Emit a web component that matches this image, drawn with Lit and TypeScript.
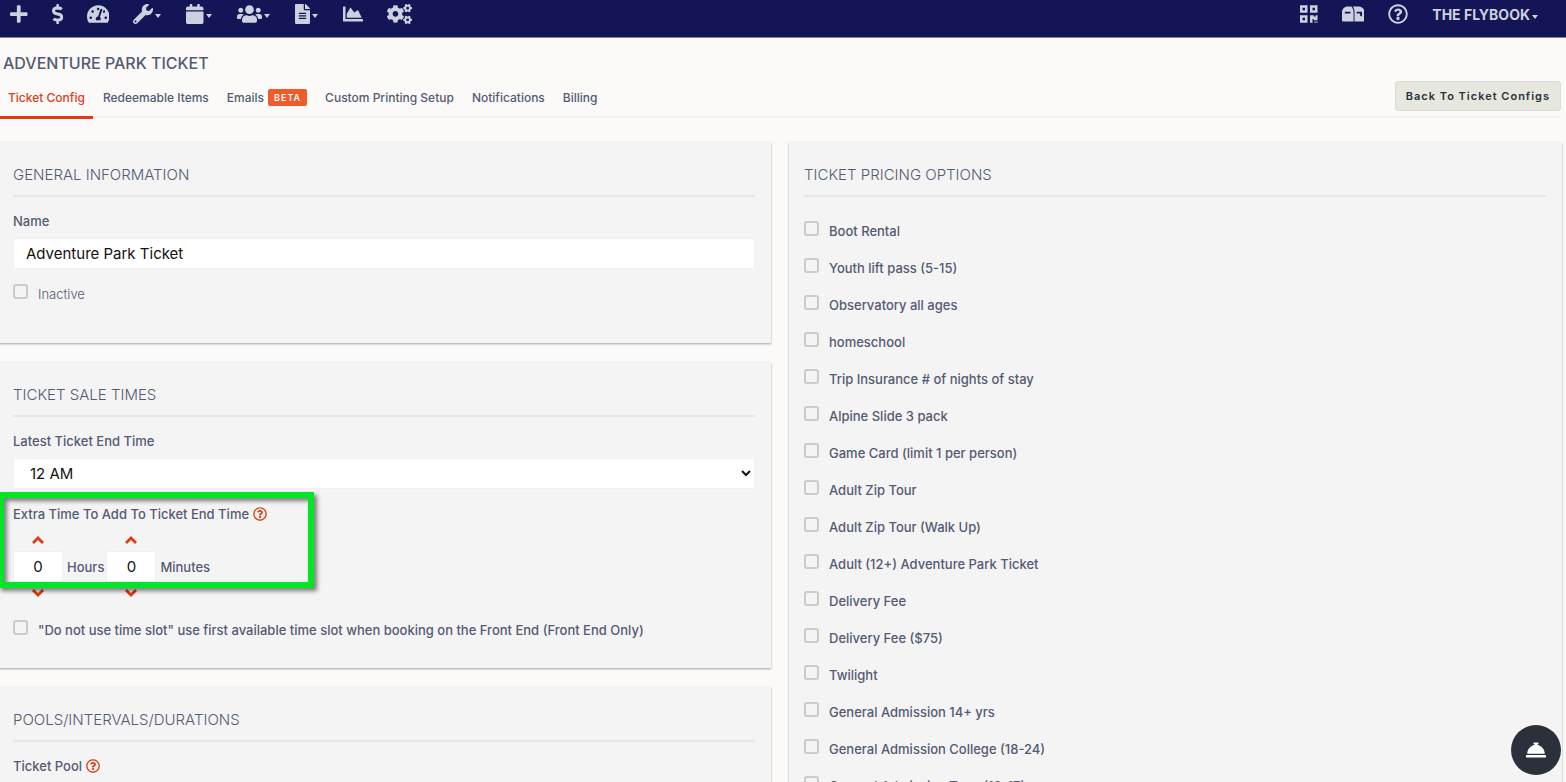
import { LitElement, html, css } from "lit";
import { customElement, property } from "lit/decorators.js";

const shared = css`
  * {
    box-sizing: border-box;
  }
  button,
  input,
  select {
    font: inherit;
    color: inherit;
    margin: 0;
  }
  svg {
    display: block;
    fill: currentColor;
  }
`;

type Glyph = { w: number; d: string };
const glyphs: Record<string, Glyph> = {
  plus: { w: 448, d: "M416 208H272V64c0-17.67-14.33-32-32-32h-32c-17.67 0-32 14.33-32 32v144H32c-17.67 0-32 14.33-32 32v32c0 17.67 14.33 32 32 32h144v144c0 17.67 14.33 32 32 32h32c17.67 0 32-14.33 32-32V304h144c17.67 0 32-14.33 32-32v-32c0-17.67-14.33-32-32-32z" },
  dollar: { w: 288, d: "M209.2 233.4l-108-31.6C88.7 198.2 80 186.5 80 173.5c0-16.3 13.2-29.5 29.5-29.5h66.3c12.2 0 24.2 3.7 34.2 10.5 6.1 4.1 14.3 3.1 19.5-2l34.8-34c7.1-6.9 6.1-18.4-1.8-24.5C238 74.8 207.4 64.1 176 64V16c0-8.8-7.2-16-16-16h-32c-8.8 0-16 7.2-16 16v48h-2.5C45.8 64-5.4 118.7.5 183.6c4.2 46.1 39.4 83.6 83.8 96.6l102.5 30c12.5 3.7 21.2 15.3 21.2 28.3 0 16.3-13.2 29.5-29.5 29.5h-66.3C100 368 88 364.3 78 357.5c-6.1-4.1-14.3-3.1-19.5 2l-34.8 34c-7.1 6.9-6.1 18.4 1.8 24.5 24.5 19.2 55.1 29.9 86.5 30v48c0 8.8 7.2 16 16 16h32c8.8 0 16-7.2 16-16v-48.2c46.6-.9 90.3-28.6 105.7-72.7 21.5-61.6-14.6-124.8-72.5-141.7z" },
  gauge: { w: 576, d: "M288 32C128.94 32 0 160.94 0 320c0 52.8 14.25 102.26 39.06 144.8 5.61 9.62 16.3 15.2 27.44 15.2h443c11.14 0 21.83-5.58 27.44-15.2C561.75 422.26 576 372.8 576 320c0-159.06-128.94-288-288-288zm0 64c14.71 0 26.58 10.13 30.32 23.65-1.11 2.26-2.64 4.23-3.45 6.67l-9.22 27.67c-5.13 3.49-10.97 6.01-17.64 6.01-17.67 0-32-14.33-32-32S270.33 96 288 96zM96 384c-17.67 0-32-14.33-32-32s14.33-32 32-32 32 14.33 32 32-14.33 32-32 32zm48-160c-17.67 0-32-14.33-32-32s14.33-32 32-32 32 14.33 32 32-14.33 32-32 32zm246.77-72.41l-61.33 184C343.13 347.33 352 364.54 352 384c0 11.72-3.38 22.55-8.88 32H232.88c-5.5-9.45-8.88-20.28-8.88-32 0-33.94 26.5-61.43 59.9-63.59l61.34-184.01c4.17-12.56 17.73-19.45 30.36-15.17 12.57 4.19 19.35 17.79 15.17 30.36zm14.66 57.2l15.52-46.55c3.47-1.29 7.13-2.23 11.05-2.23 17.67 0 32 14.33 32 32s-14.33 32-32 32c-11.38-.01-20.89-6.28-26.57-15.22zM480 384c-17.67 0-32-14.33-32-32s14.33-32 32-32 32 14.33 32 32-14.33 32-32 32z" },
  wrench: { w: 512, d: "M507.73 109.1c-2.24-9.03-13.54-12.09-20.12-5.51l-74.36 74.36-67.88-11.31-11.31-67.88 74.36-74.36c6.62-6.62 3.43-17.9-5.66-20.16-47.38-11.74-99.55.91-136.58 37.93-39.64 39.64-50.55 97.1-34.05 147.2L18.74 402.76c-24.99 24.99-24.99 65.51 0 90.5 24.99 24.99 65.51 24.99 90.5 0l213.21-213.21c50.12 16.71 107.47 5.68 147.37-34.22 37.07-37.07 49.7-89.32 37.91-136.73zM64 472c-13.25 0-24-10.75-24-24 0-13.26 10.75-24 24-24s24 10.74 24 24c0 13.25-10.75 24-24 24z" },
  calendar: { w: 448, d: "M12 192h424c6.6 0 12 5.4 12 12v260c0 26.5-21.5 48-48 48H48c-26.5 0-48-21.5-48-48V204c0-6.6 5.4-12 12-12zm436-44v-36c0-26.5-21.5-48-48-48h-48V12c0-6.6-5.4-12-12-12h-40c-6.6 0-12 5.4-12 12v52H160V12c0-6.6-5.4-12-12-12h-40c-6.6 0-12 5.4-12 12v52H48C21.5 64 0 85.5 0 112v36c0 6.6 5.4 12 12 12h424c6.6 0 12-5.4 12-12z" },
  users: { w: 640, d: "M96 224c35.3 0 64-28.7 64-64s-28.7-64-64-64-64 28.7-64 64 28.7 64 64 64zm448 0c35.3 0 64-28.7 64-64s-28.7-64-64-64-64 28.7-64 64 28.7 64 64 64zm32 32h-64c-17.6 0-33.5 7.1-45.1 18.6 40.3 22.1 68.9 62 75.1 109.4h66c17.7 0 32-14.3 32-32v-32c0-35.3-28.7-64-64-64zm-256 0c61.9 0 112-50.1 112-112S381.9 32 320 32 208 82.1 208 144s50.1 112 112 112zm76.8 32h-8.3c-20.8 10-43.9 16-68.5 16s-47.6-6-68.5-16h-8.3C179.6 288 128 339.6 128 403.2V432c0 26.5 21.5 48 48 48h288c26.5 0 48-21.5 48-48v-28.8c0-63.6-51.6-115.2-115.2-115.2zm-223.7-13.4C161.5 263.1 145.6 256 128 256H64c-35.3 0-64 28.7-64 64v32c0 17.7 14.3 32 32 32h65.9c6.3-47.4 34.9-87.3 75.2-109.4z" },
  file: { w: 384, d: "M224 136V0H24C10.7 0 0 10.7 0 24v464c0 13.3 10.7 24 24 24h336c13.3 0 24-10.7 24-24V160H248c-13.2 0-24-10.8-24-24zm64 236c0 6.6-5.4 12-12 12H108c-6.6 0-12-5.4-12-12v-8c0-6.6 5.4-12 12-12h168c6.6 0 12 5.4 12 12v8zm0-64c0 6.6-5.4 12-12 12H108c-6.6 0-12-5.4-12-12v-8c0-6.6 5.4-12 12-12h168c6.6 0 12 5.4 12 12v8zm0-72v8c0 6.6-5.4 12-12 12H108c-6.6 0-12-5.4-12-12v-8c0-6.6 5.4-12 12-12h168c6.6 0 12 5.4 12 12zm96-114.1v6.1H256V0h6.1c6.4 0 12.5 2.5 17 7l97.9 98c4.5 4.5 7 10.6 7 16.9z" },
  chart: { w: 512, d: "M500 384c6.6 0 12 5.4 12 12v40c0 6.6-5.4 12-12 12H12c-6.6 0-12-5.4-12-12V76c0-6.6 5.4-12 12-12h40c6.6 0 12 5.4 12 12v308h436zM372.7 159.5L288 216l-85.3-113.7c-5.1-6.8-15.5-6.3-19.9 1L96 248v104h384l-89.9-187.8c-3.2-6.5-11.4-8.7-17.4-4.7z" },
  cogs: { w: 640, d: "M512.1 191l-8.2 14.3c-3 5.3-9.4 7.5-15.1 5.4-11.8-4.4-22.6-10.7-32.1-18.6-4.6-3.8-5.8-10.5-2.8-15.7l8.2-14.3c-6.9-8-12.3-17.3-15.9-27.4h-16.5c-6 0-11.2-4.3-12.2-10.3-2-12-2.1-24.6 0-37.1 1-6 6.2-10.4 12.2-10.4h16.5c3.6-10.1 9-19.4 15.9-27.4l-8.2-14.3c-3-5.2-1.9-11.9 2.8-15.7 9.5-7.9 20.4-14.2 32.1-18.6 5.7-2.1 12.1.1 15.1 5.4l8.2 14.3c10.5-1.9 21.2-1.9 31.7 0L552 6.3c3-5.3 9.4-7.5 15.1-5.4 11.8 4.4 22.6 10.7 32.1 18.6 4.6 3.8 5.8 10.5 2.8 15.7l-8.2 14.3c6.9 8 12.3 17.3 15.9 27.4h16.5c6 0 11.2 4.3 12.2 10.3 2 12 2.1 24.6 0 37.1-1 6-6.2 10.4-12.2 10.4h-16.5c-3.6 10.1-9 19.4-15.9 27.4l8.2 14.3c3 5.2 1.9 11.9-2.8 15.7-9.5 7.9-20.4 14.2-32.1 18.6-5.7 2.1-12.1-.1-15.1-5.4l-8.2-14.3c-10.4 1.9-21.2 1.9-31.7 0zm-10.5-58.8c38.5 29.6 82.4-14.3 52.8-52.8-38.5-29.7-82.4 14.3-52.8 52.8zM386.3 286.1l33.7 16.8c10.1 5.8 14.5 18.1 10.5 29.1-8.9 24.2-26.4 46.4-42.6 65.8-7.4 8.9-20.2 11.1-30.3 5.3l-29.1-16.8c-16 13.7-34.6 24.6-54.9 31.7v33.6c0 11.6-8.3 21.6-19.7 23.6-24.6 4.2-50.4 4.4-75.9 0-11.5-2-20-11.9-20-23.6V418c-20.3-7.2-38.9-18-54.9-31.7L74 403c-10 5.8-22.9 3.6-30.3-5.3-16.2-19.4-33.3-41.6-42.2-65.7-4-10.9.4-23.2 10.5-29.1l33.3-16.8c-3.9-20.9-3.9-42.4 0-63.4L12 205.8c-10.1-5.8-14.6-18.1-10.5-29 8.9-24.2 26-46.4 42.2-65.8 7.4-8.9 20.2-11.1 30.3-5.3l29.1 16.8c16-13.7 34.6-24.6 54.9-31.7V57.1c0-11.5 8.2-21.5 19.6-23.5 24.6-4.2 50.5-4.4 76-.1 11.5 2 20 11.9 20 23.6v33.6c20.3 7.2 38.9 18 54.9 31.7l29.1-16.8c10-5.8 22.9-3.6 30.3 5.3 16.2 19.4 33.2 41.6 42.1 65.8 4 10.9.1 23.2-10 29.1l-33.7 16.8c3.9 21 3.9 42.5 0 63.5zm-117.6 21.1c59.2-77-28.7-164.9-105.7-105.7-59.2 77 28.7 164.9 105.7 105.7zm243.4 182.7l-8.2 14.3c-3 5.3-9.4 7.5-15.1 5.4-11.8-4.4-22.6-10.7-32.1-18.6-4.6-3.8-5.8-10.5-2.8-15.7l8.2-14.3c-6.9-8-12.3-17.3-15.9-27.4h-16.5c-6 0-11.2-4.3-12.2-10.3-2-12-2.1-24.6 0-37.1 1-6 6.2-10.4 12.2-10.4h16.5c3.6-10.1 9-19.4 15.9-27.4l-8.2-14.3c-3-5.2-1.9-11.9 2.8-15.7 9.5-7.9 20.4-14.2 32.1-18.6 5.7-2.1 12.1.1 15.1 5.4l8.2 14.3c10.5-1.9 21.2-1.9 31.7 0l8.2-14.3c3-5.3 9.4-7.5 15.1-5.4 11.8 4.4 22.6 10.7 32.1 18.6 4.6 3.8 5.8 10.5 2.8 15.7l-8.2 14.3c6.9 8 12.3 17.3 15.9 27.4h16.5c6 0 11.2 4.3 12.2 10.3 2 12 2.1 24.6 0 37.1-1 6-6.2 10.4-12.2 10.4h-16.5c-3.6 10.1-9 19.4-15.9 27.4l8.2 14.3c3 5.2 1.9 11.9-2.8 15.7-9.5 7.9-20.4 14.2-32.1 18.6-5.7 2.1-12.1-.1-15.1-5.4l-8.2-14.3c-10.4 1.9-21.2 1.9-31.7 0zM501.6 431c38.5 29.6 82.4-14.3 52.8-52.8-38.5-29.6-82.4 14.3-52.8 52.8z" },
  help: { w: 512, d: "M256 8C119.043 8 8 119.083 8 256c0 136.997 111.043 248 248 248s248-111.003 248-248C504 119.083 392.957 8 256 8zm0 448c-110.532 0-200-89.431-200-200 0-110.495 89.472-200 200-200 110.491 0 200 89.471 200 200 0 110.53-89.431 200-200 200zm107.244-255.2c0 67.052-72.421 68.084-72.421 92.863V300c0 6.627-5.373 12-12 12h-45.647c-6.627 0-12-5.373-12-12v-8.659c0-35.745 27.1-50.034 47.579-61.516 17.561-9.845 28.324-16.541 28.324-29.579 0-17.246-21.999-28.693-39.784-28.693-23.189 0-33.894 10.977-48.942 29.969-4.057 5.12-11.46 6.071-16.666 2.124l-27.824-21.098c-5.107-3.872-6.251-11.066-2.644-16.363C184.846 131.491 214.94 112 261.794 112c49.071 0 101.45 38.304 101.45 88.8zM298 368c0 23.159-18.841 42-42 42s-42-18.841-42-42 18.841-42 42-42 42 18.841 42 42z" },
  mailbox: { w: 576, d: "M144 64C64.500 64 0 128.500 0 208v216c0 13.300 10.700 24 24 24h272V208c0-59-24-112-56-144zM72 200h144v40H72zM280 64c24 38 40 88 40 144v240h232c13.300 0 24-10.700 24-24V208C576 128.500 511.500 64 432 64zM376 200h120c8.800 0 16 7.200 16 16v80c0 8.800-7.200 16-16 16h-16c-8.800 0-16-7.200-16-16v-56h-88z" },
  qr: { w: 448, d: "M0 32h192v192H0zM64 96v64h64V96zM256 32h192v192H256zM320 96v64h64V96zM0 288h192v192H0zM64 352v64h64v-64zM256 288h96v32h48v-32h48v128H352v-32h-32v96h-64zM368 448h32v32h-32zM416 448h32v32h-32z" },
  bell: { w: 512, d: "M288 130.540V112h16c8.840 0 16-7.160 16-16V80c0-8.840-7.160-16-16-16h-96c-8.840 0-16 7.160-16 16v16c0 8.840 7.160 16 16 16h16v18.540C115.490 146.110 32 239.180 32 352h448c0-112.820-83.490-205.890-192-221.460zM496 384H16c-8.840 0-16 7.160-16 16v32c0 8.840 7.160 16 16 16h480c8.840 0 16-7.160 16-16v-32c0-8.840-7.160-16-16-16z" },
};

@customElement("fb-icon")
export class FbIcon extends LitElement {
  @property() name = "plus";
  @property({ type: Number }) size = 20;

  static styles = [
    shared,
    css`
      :host {
        display: block;
        flex: none;
      }
    `,
  ];

  render() {
    const g = glyphs[this.name];
    return html`<svg height=${this.size} width=${(this.size * g.w) / 512} viewBox="0 0 ${g.w} 512" aria-hidden="true">
      <path fill-rule="evenodd" d=${g.d}></path>
    </svg>`;
  }
}

@customElement("fb-topbar")
export class FbTopbar extends LitElement {
  static styles = [
    shared,
    css`
      :host {
        display: block;
      }
      .bar {
        display: flex;
        align-items: center;
        justify-content: space-between;
        height: 38px;
        padding: 0 27px 9px 10px;
        background: #141556;
        border-bottom: 1px solid #85858c;
        color: #cdd0de;
      }
      .group {
        display: flex;
        align-items: center;
        gap: 24px;
      }
      button {
        display: flex;
        align-items: center;
        gap: 2px;
        padding: 0;
        border: 0;
        background: none;
      }
      .caret {
        border: 3px solid transparent;
        border-top: 4px solid currentColor;
        border-bottom: 0;
        margin: 4px 1px 0 0;
      }
      .account {
        padding-top: 2px;
        font-size: 14px;
        line-height: 20px;
        font-weight: 700;
      }
    `,
  ];

  render() {
    const item = (name: string, label: string, menu = false) =>
      html`<button aria-label=${label}><fb-icon name=${name}></fb-icon>${menu ? html`<span class="caret"></span>` : null}</button>`;
    return html`<header class="bar">
      <nav class="group" aria-label="Main">
        ${item("plus", "Add")} ${item("dollar", "Sales")} ${item("gauge", "Dashboard")} ${item("wrench", "Setup", true)}
        ${item("calendar", "Calendar", true)} ${item("users", "Customers", true)} ${item("file", "Reports", true)}
        ${item("chart", "Analytics")} ${item("cogs", "Settings")}
      </nav>
      <div class="group">
        ${item("qr", "Scan")} ${item("mailbox", "Mail")} ${item("help", "Help")}
        <button class="account">THE FLYBOOK<span class="caret"></span></button>
      </div>
    </header>`;
  }
}

@customElement("fb-tabs")
export class FbTabs extends LitElement {
  static styles = [
    shared,
    css`
      :host {
        display: block;
      }
      .row {
        display: flex;
        justify-content: space-between;
        align-items: flex-end;
        margin-right: 5px;
        border-bottom: 2px solid #f1f2f1;
      }
      .tabs {
        display: flex;
        gap: 2px;
        margin-bottom: -3px;
      }
      a {
        display: flex;
        align-items: center;
        gap: 4px;
        height: 40px;
        padding: 0 8px;
        border-bottom: 3px solid transparent;
        color: #555a73;
        font-size: 12px;
        line-height: 16px;
        font-weight: 500;
        text-decoration: none;
        white-space: nowrap;
      }
      a.active {
        color: #d9401a;
        border-color: #dc3d12;
      }
      .badge {
        padding: 0 6px;
        border-radius: 2px;
        background: #f15a29;
        color: #fff;
        font-size: 9px;
        line-height: 17px;
        font-weight: 600;
        letter-spacing: 1px;
      }
      button {
        height: 30px;
        margin-bottom: 5px;
        padding: 0 10px;
        border: 1px solid #dcddd6;
        border-radius: 3px;
        background: #e6e8df;
        color: #2c3038;
        font-size: 11px;
        font-weight: 600;
        letter-spacing: 1px;
        white-space: nowrap;
      }
    `,
  ];

  render() {
    return html`<div class="row">
      <nav class="tabs" aria-label="Ticket sections">
        <a class="active" href="#config">Ticket Config</a>
        <a href="#items">Redeemable Items</a>
        <a href="#emails">Emails <span class="badge">BETA</span></a>
        <a href="#printing">Custom Printing Setup</a>
        <a href="#notifications">Notifications</a>
        <a href="#billing">Billing</a>
      </nav>
      <button>Back To Ticket Configs</button>
    </div>`;
  }
}

const pricing = [
  "Boot Rental",
  "Youth lift pass (5-15)",
  "Observatory all ages",
  "homeschool",
  "Trip Insurance # of nights of stay",
  "Alpine Slide 3 pack",
  "Game Card (limit 1 per person)",
  "Adult Zip Tour",
  "Adult Zip Tour (Walk Up)",
  "Adult (12+) Adventure Park Ticket",
  "Delivery Fee",
  "Delivery Fee ($75)",
  "Twilight",
  "General Admission 14+ yrs",
  "General Admission College (18-24)",
  "General Admission Teen (13-17)",
];

@customElement("app-root")
export class AppRoot extends LitElement {
  static styles = [
    shared,
    css`
      :host {
        display: block;
        height: 100vh;
        overflow: hidden;
        background: #fbfaf8;
        color: #555a73;
        font-family: Inter, "Open Sans", sans-serif;
        font-size: 13px;
        line-height: 20px;
      }
      h1 {
        margin: 0;
        padding: 13px 3px 4px;
        font-size: 16px;
        line-height: 24px;
        font-weight: 500;
      }
      .columns {
        display: grid;
        grid-template-columns: 1fr 1fr;
        gap: 18px;
        margin: 24px 4px 0 -2px;
      }
      .stack {
        display: flex;
        flex-direction: column;
        gap: 19px;
      }
      .panel {
        padding: 21px 16px 28px 15px;
        background: #f4f4f4;
        box-shadow: 0 1px 2px rgba(0, 0, 0, 0.35);
      }
      h2 {
        margin: 0 0 14px;
        padding-bottom: 8px;
        border-bottom: 2px solid #e7e7e7;
        font-size: 15px;
        line-height: 24px;
        font-weight: 300;
      }
      .label {
        display: flex;
        align-items: center;
        gap: 4px;
        font-weight: 500;
      }
      .field {
        display: block;
        width: 100%;
        height: 31px;
        margin: 7px 0 15px;
        padding: 0 12px;
        border: 1px solid #f0f0f0;
        background: #fff;
        color: #111;
        font-size: 15px;
      }
      .check {
        display: flex;
        align-items: flex-start;
        gap: 10px;
      }
      .check input {
        appearance: none;
        flex: none;
        width: 15px;
        height: 15px;
        border: 2px solid #cbcbcb;
        border-radius: 3px;
      }
      .strong {
        font-weight: 500;
      }
      .light {
        margin-bottom: 11px;
        font-weight: 300;
      }
      .help {
        padding: 0;
        border: 0;
        background: none;
        color: #dc3d12;
      }
      .times {
        position: relative;
      }
      .steppers {
        display: flex;
        gap: 2px;
        margin: 8px 0 19px;
      }
      .stepper {
        display: grid;
        grid-template-columns: 50px auto;
        gap: 3px 4px;
        align-items: center;
        justify-items: center;
      }
      .stepper button {
        grid-column: 1;
        padding: 4px;
        border: 0;
        background: none;
        color: #dc3d12;
      }
      .stepper input {
        grid-column: 1;
        width: 50px;
        height: 31px;
        padding: 0;
        border: 1px solid #f0f0f0;
        background: #fff;
        color: #111;
        font-size: 15px;
        text-align: center;
      }
      .stepper label {
        font-weight: 500;
      }
      .highlight {
        position: absolute;
        left: -15px;
        top: -12px;
        width: 316px;
        height: 96px;
        border: 6px solid #00e626;
        filter: drop-shadow(3px 3px 2px rgba(0, 0, 0, 0.5));
        pointer-events: none;
      }
      .options {
        display: grid;
        gap: 17px;
        margin: 24px 0 0;
        padding: 0;
        list-style: none;
      }
      .fab {
        position: fixed;
        right: 5px;
        bottom: 7px;
        display: grid;
        place-items: center;
        width: 50px;
        height: 50px;
        padding: 0;
        border: 0;
        border-radius: 50%;
        background: #2b303b;
        color: #fff;
      }
    `,
  ];

  chevron(up: boolean) {
    return html`<svg width="12" height="8" viewBox="0 0 12 8" aria-hidden="true">
      <path d=${up ? "M6 0l6 6-2 2-4-4-4 4-2-2z" : "M6 8l6-6-2-2-4 4-4-4-2 2z"}></path>
    </svg>`;
  }

  stepper(id: string, label: string) {
    return html`<div class="stepper">
      <button aria-label="Increase ${label}">${this.chevron(true)}</button>
      <input id=${id} value="0" />
      <label for=${id}>${label}</label>
      <button aria-label="Decrease ${label}">${this.chevron(false)}</button>
    </div>`;
  }

  helpButton() {
    return html`<button class="help" aria-label="Help"><fb-icon name="help" size="14"></fb-icon></button>`;
  }

  render() {
    return html`
      <fb-topbar></fb-topbar>
      <h1>ADVENTURE PARK TICKET</h1>
      <fb-tabs></fb-tabs>
      <main class="columns">
        <div class="stack">
          <section class="panel">
            <h2>GENERAL INFORMATION</h2>
            <label class="label" for="name">Name</label>
            <input class="field" id="name" value="Adventure Park Ticket" />
            <label class="check light"><input type="checkbox" /><span>Inactive</span></label>
          </section>
          <section class="panel">
            <h2>TICKET SALE TIMES</h2>
            <label class="label" for="latest">Latest Ticket End Time</label>
            <select class="field" id="latest">
              <option>12 AM</option>
            </select>
            <div class="times">
              <div class="label">Extra Time To Add To Ticket End Time ${this.helpButton()}</div>
              <div class="steppers">${this.stepper("hours", "Hours")} ${this.stepper("minutes", "Minutes")}</div>
              <div class="highlight"></div>
            </div>
            <label class="check strong">
              <input type="checkbox" />
              <span>"Do not use time slot" use first available time slot when booking on the Front End (Front End Only)</span>
            </label>
          </section>
          <section class="panel">
            <h2>POOLS/INTERVALS/DURATIONS</h2>
            <div class="label">Ticket Pool ${this.helpButton()}</div>
          </section>
        </div>
        <section class="panel">
          <h2>TICKET PRICING OPTIONS</h2>
          <ul class="options">
            ${pricing.map((name) => html`<li><label class="check strong"><input type="checkbox" /><span>${name}</span></label></li>`)}
          </ul>
        </section>
      </main>
      <button class="fab" aria-label="Support"><fb-icon name="bell"></fb-icon></button>
    `;
  }
}
